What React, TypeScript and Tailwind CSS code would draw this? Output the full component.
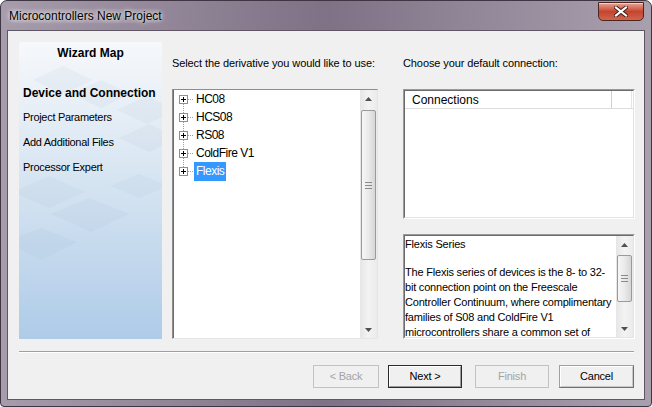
import React from "react";

function Arrow({ dir }: { dir: "up" | "down" }) {
  return (
    <svg width="7" height="4" viewBox="0 0 7 4">
      {dir === "up" ? (
        <path d="M0 4 L3.5 0 L7 4 Z" fill="#505050" />
      ) : (
        <path d="M0 0 L3.5 4 L7 0 Z" fill="#505050" />
      )}
    </svg>
  );
}

function VScroll({ thumb }: { thumb: string }) {
  return (
    <div className="relative w-[17px] h-full shrink-0 bg-gradient-to-r from-[#e6e6e6] via-[#f3f3f3] to-[#ebebeb]">
      <div className="absolute top-0 left-0 w-full h-[17px] flex items-center justify-center">
        <Arrow dir="up" />
      </div>
      <div
        className={
          "absolute left-[1px] w-[15px] rounded-[2px] border border-[#9a9a9a] bg-gradient-to-r from-[#f6f6f6] via-[#eaeaea] to-[#d6d6d6] flex flex-col items-center justify-center gap-[2px] " +
          thumb
        }
      >
        <div className="w-[7px] h-px bg-[#8a8a8a]" />
        <div className="w-[7px] h-px bg-[#8a8a8a]" />
        <div className="w-[7px] h-px bg-[#8a8a8a]" />
      </div>
      <div className="absolute bottom-0 left-0 w-full h-[17px] flex items-center justify-center">
        <Arrow dir="down" />
      </div>
    </div>
  );
}

function PlusBox() {
  return (
    <div className="relative w-[9px] h-[9px] border border-[#8f8f8f] bg-white shrink-0 flex items-center justify-center">
      <div className="absolute w-[5px] h-px bg-black" />
      <div className="absolute w-px h-[5px] bg-black" />
    </div>
  );
}

const items = ["HC08", "HCS08", "RS08", "ColdFire V1", "Flexis"];

function Button({
  label,
  kind,
  cls,
}: {
  label: string;
  kind: "disabled" | "default" | "normal";
  cls: string;
}) {
  if (kind === "disabled")
    return (
      <div
        className={
          "h-[23px] border border-[#c3c3c3] bg-[#f0f0f0] flex items-center justify-center text-[11px] tracking-[-0.2px] text-[#a3a3a3] " +
          cls
        }
      >
        {label}
      </div>
    );
  if (kind === "default")
    return (
      <div
        className={
          "h-[23px] border border-[#2b2b2b] bg-[#f0f0f0] flex items-center justify-center text-[11px] tracking-[-0.2px] text-black " +
          cls
        }
      >
        <div className="w-full h-full border border-[#9a9a9a] border-t-white border-l-white flex items-center justify-center">
          {label}
        </div>
      </div>
    );
  return (
    <div
      className={
        "h-[23px] border border-[#a0a0a0] border-r-[#6f6f6f] border-b-[#6f6f6f] bg-[#f0f0f0] flex items-center justify-center text-[11px] tracking-[-0.2px] text-black " +
        cls
      }
    >
      <div className="w-full h-full border border-white border-r-[#c8c8c8] border-b-[#c8c8c8] flex items-center justify-center">
        {label}
      </div>
    </div>
  );
}

export default function App() {
  return (
    <div className="w-[652px] h-[407px] overflow-hidden bg-white font-['Liberation_Sans',Arial,sans-serif]">
      <div className="w-full h-full rounded-t-[7px] rounded-b-[4px] border border-[#3e3642] bg-gradient-to-r from-[#a69cab] via-[#7f7186] to-[#a9a0ae] flex flex-col">
        {/* Title bar */}
        <div className="relative h-[29px] shrink-0 flex items-center pl-[7px]">
          <span className="text-[12px] leading-[14px] text-black px-[1px] rounded-[8px] bg-[rgba(255,255,255,0.08)] [text-shadow:0_0_6px_rgba(255,255,255,0.9),0_0_3px_rgba(255,255,255,0.7)]">
            Microcontrollers New Project
          </span>
          <div className="absolute right-[7px] top-[1px] w-[46px] h-[19px] rounded-b-[5px] border border-[#4c2520] bg-gradient-to-b from-[#e6a496] via-[#c5432f] to-[#d2644c] flex items-center justify-center shadow-[inset_0_1px_0_rgba(255,255,255,0.5)]">
            <svg width="14" height="11" viewBox="0 0 14 11">
              <path d="M2 1.5 L12 9.5 M12 1.5 L2 9.5" stroke="#3a1a15" strokeWidth="4" strokeLinecap="square" />
              <path d="M2 1.5 L12 9.5 M12 1.5 L2 9.5" stroke="#ffffff" strokeWidth="2.2" strokeLinecap="square" />
            </svg>
          </div>
        </div>

        {/* Client area */}
        <div className="mx-[6px] h-[370px] shrink-0 border border-[#5e5663] bg-[#f0f0f0] flex flex-col pt-[11px] pl-[11px] pr-[10px]">
          <div className="flex h-[297px]">
            {/* Wizard map */}
            <div className="relative w-[143px] h-full shrink-0 bg-gradient-to-b from-[#f6f8fb] via-[#d4e3f1] to-[#aecbe8] overflow-hidden">
              <svg className="absolute inset-0" width="143" height="297" viewBox="0 0 143 297">
                <g fill="#8ea6bf" fillOpacity="0.08">
                  <polygon points="14,38 44,24 74,38 44,52" />
                  <polygon points="52,52 82,38 112,52 82,66" />
                  <polygon points="98,68 128,54 158,68 128,82" />
                  <polygon points="100,96 130,82 160,96 130,110" />
                  <polygon points="-6,150 30,134 66,150 30,166" />
                  <polygon points="92,144 120,132 148,144 120,156" />
                  <polygon points="32,172 70,156 110,172 72,190" />
                  <polygon points="-14,200 22,186 58,200 22,218" />
                </g>
              </svg>
              <div className="relative flex flex-col">
                <div className="h-[18px] flex items-end justify-center text-[12px] leading-[14px] font-bold text-black">
                  Wizard Map
                </div>
                <div className="mt-[26px] pl-[4px] text-[12px] leading-[14px] font-bold text-black">
                  Device and Connection
                </div>
                <div className="mt-[10px] pl-[4px] text-[11px] leading-[14px] tracking-[-0.3px] text-black">
                  Project Parameters
                </div>
                <div className="mt-[11px] pl-[4px] text-[11px] leading-[14px] tracking-[-0.3px] text-black">
                  Add Additional Files
                </div>
                <div className="mt-[11px] pl-[4px] text-[11px] leading-[14px] tracking-[-0.3px] text-black">
                  Processor Expert
                </div>
              </div>
            </div>

            {/* Derivative tree */}
            <div className="ml-[10px] w-[206px] shrink-0 flex flex-col">
              <div className="h-[47px] pt-[14px] text-[11px] leading-[14px] tracking-[-0.1px] text-black">
                Select the derivative you would like to use:
              </div>
              <div className="h-[250px] border border-[#8d8d8d] border-r-[#e6e6e6] border-b-[#e6e6e6] bg-white flex">
                <div className="relative flex-1 flex flex-col border-l border-[#6b6b6b]">
                  <div className="absolute left-[9px] top-[13px] h-[72px] border-l border-dotted border-[#a0a0a0]" />
                  {items.map((it) => (
                    <div key={it} className="relative h-[18px] flex items-center pl-[5px]">
                      <PlusBox />
                      <div className="w-[5px] border-t border-dotted border-[#a0a0a0]" />
                      <div
                        className={
                          it === "Flexis"
                            ? "ml-[1px] h-[19px] px-[2px] flex items-center bg-[#3399ff] text-white text-[12px] tracking-[-0.5px]"
                            : "ml-[1px] h-[18px] px-[2px] flex items-center text-black text-[12px] tracking-[-0.5px]"
                        }
                      >
                        {it}
                      </div>
                    </div>
                  ))}
                </div>
                <VScroll thumb="top-[20px] h-[150px]" />
              </div>
            </div>

            {/* Right column */}
            <div className="ml-[25px] w-[232px] shrink-0 flex flex-col">
              <div className="h-[47px] pt-[14px] text-[11px] leading-[14px] tracking-[-0.1px] text-black">
                Choose your default connection:
              </div>
              <div className="h-[130px] border border-[#9a9a9a] border-r-white border-b-white">
                <div className="h-full border border-[#6b6b6b] border-r-[#e3e3e3] border-b-[#e3e3e3] bg-white flex flex-col">
                  <div className="h-[18px] flex border-b border-[#dcdcdc]">
                    <div className="w-[207px] h-full border-r border-[#d0d0d0] pl-[7px] flex items-center text-[12px] text-black">
                      Connections
                    </div>
                    <div className="w-[20px] h-full border-r border-[#e5e5e5]" />
                  </div>
                </div>
              </div>

              <div className="mt-[15px] h-[105px] border border-[#9a9a9a] border-r-white border-b-white">
                <div className="h-full border border-[#6b6b6b] border-r-[#e3e3e3] border-b-[#e3e3e3] bg-white flex">
                  <div className="flex-1 overflow-hidden pl-[0px] pt-[1px] text-[11px] leading-[15px] tracking-[-0.2px] text-black whitespace-nowrap">
                    <div>Flexis Series</div>
                    <div className="h-[13px]" />
                    <div>The Flexis series of devices is the 8- to 32-</div>
                    <div>bit connection point on the Freescale</div>
                    <div>Controller Continuum, where complimentary</div>
                    <div>families of S08 and ColdFire V1</div>
                    <div>microcontrollers share a common set of</div>
                  </div>
                  <VScroll thumb="top-[19px] h-[47px]" />
                </div>
              </div>
            </div>
          </div>

          {/* Separator */}
          <div className="mt-[12px] h-[2px] border-t border-[#a0a0a0] border-b border-b-white" />

          {/* Buttons */}
          <div className="mt-[12px] flex justify-end">
            <Button label="< Back" kind="disabled" cls="w-[66px]" />
            <Button label="Next >" kind="default" cls="ml-[9px] w-[74px]" />
            <Button label="Finish" kind="disabled" cls="ml-[13px] w-[74px]" />
            <Button label="Cancel" kind="normal" cls="ml-[10px] w-[75px]" />
          </div>
        </div>
      </div>
    </div>
  );
}
